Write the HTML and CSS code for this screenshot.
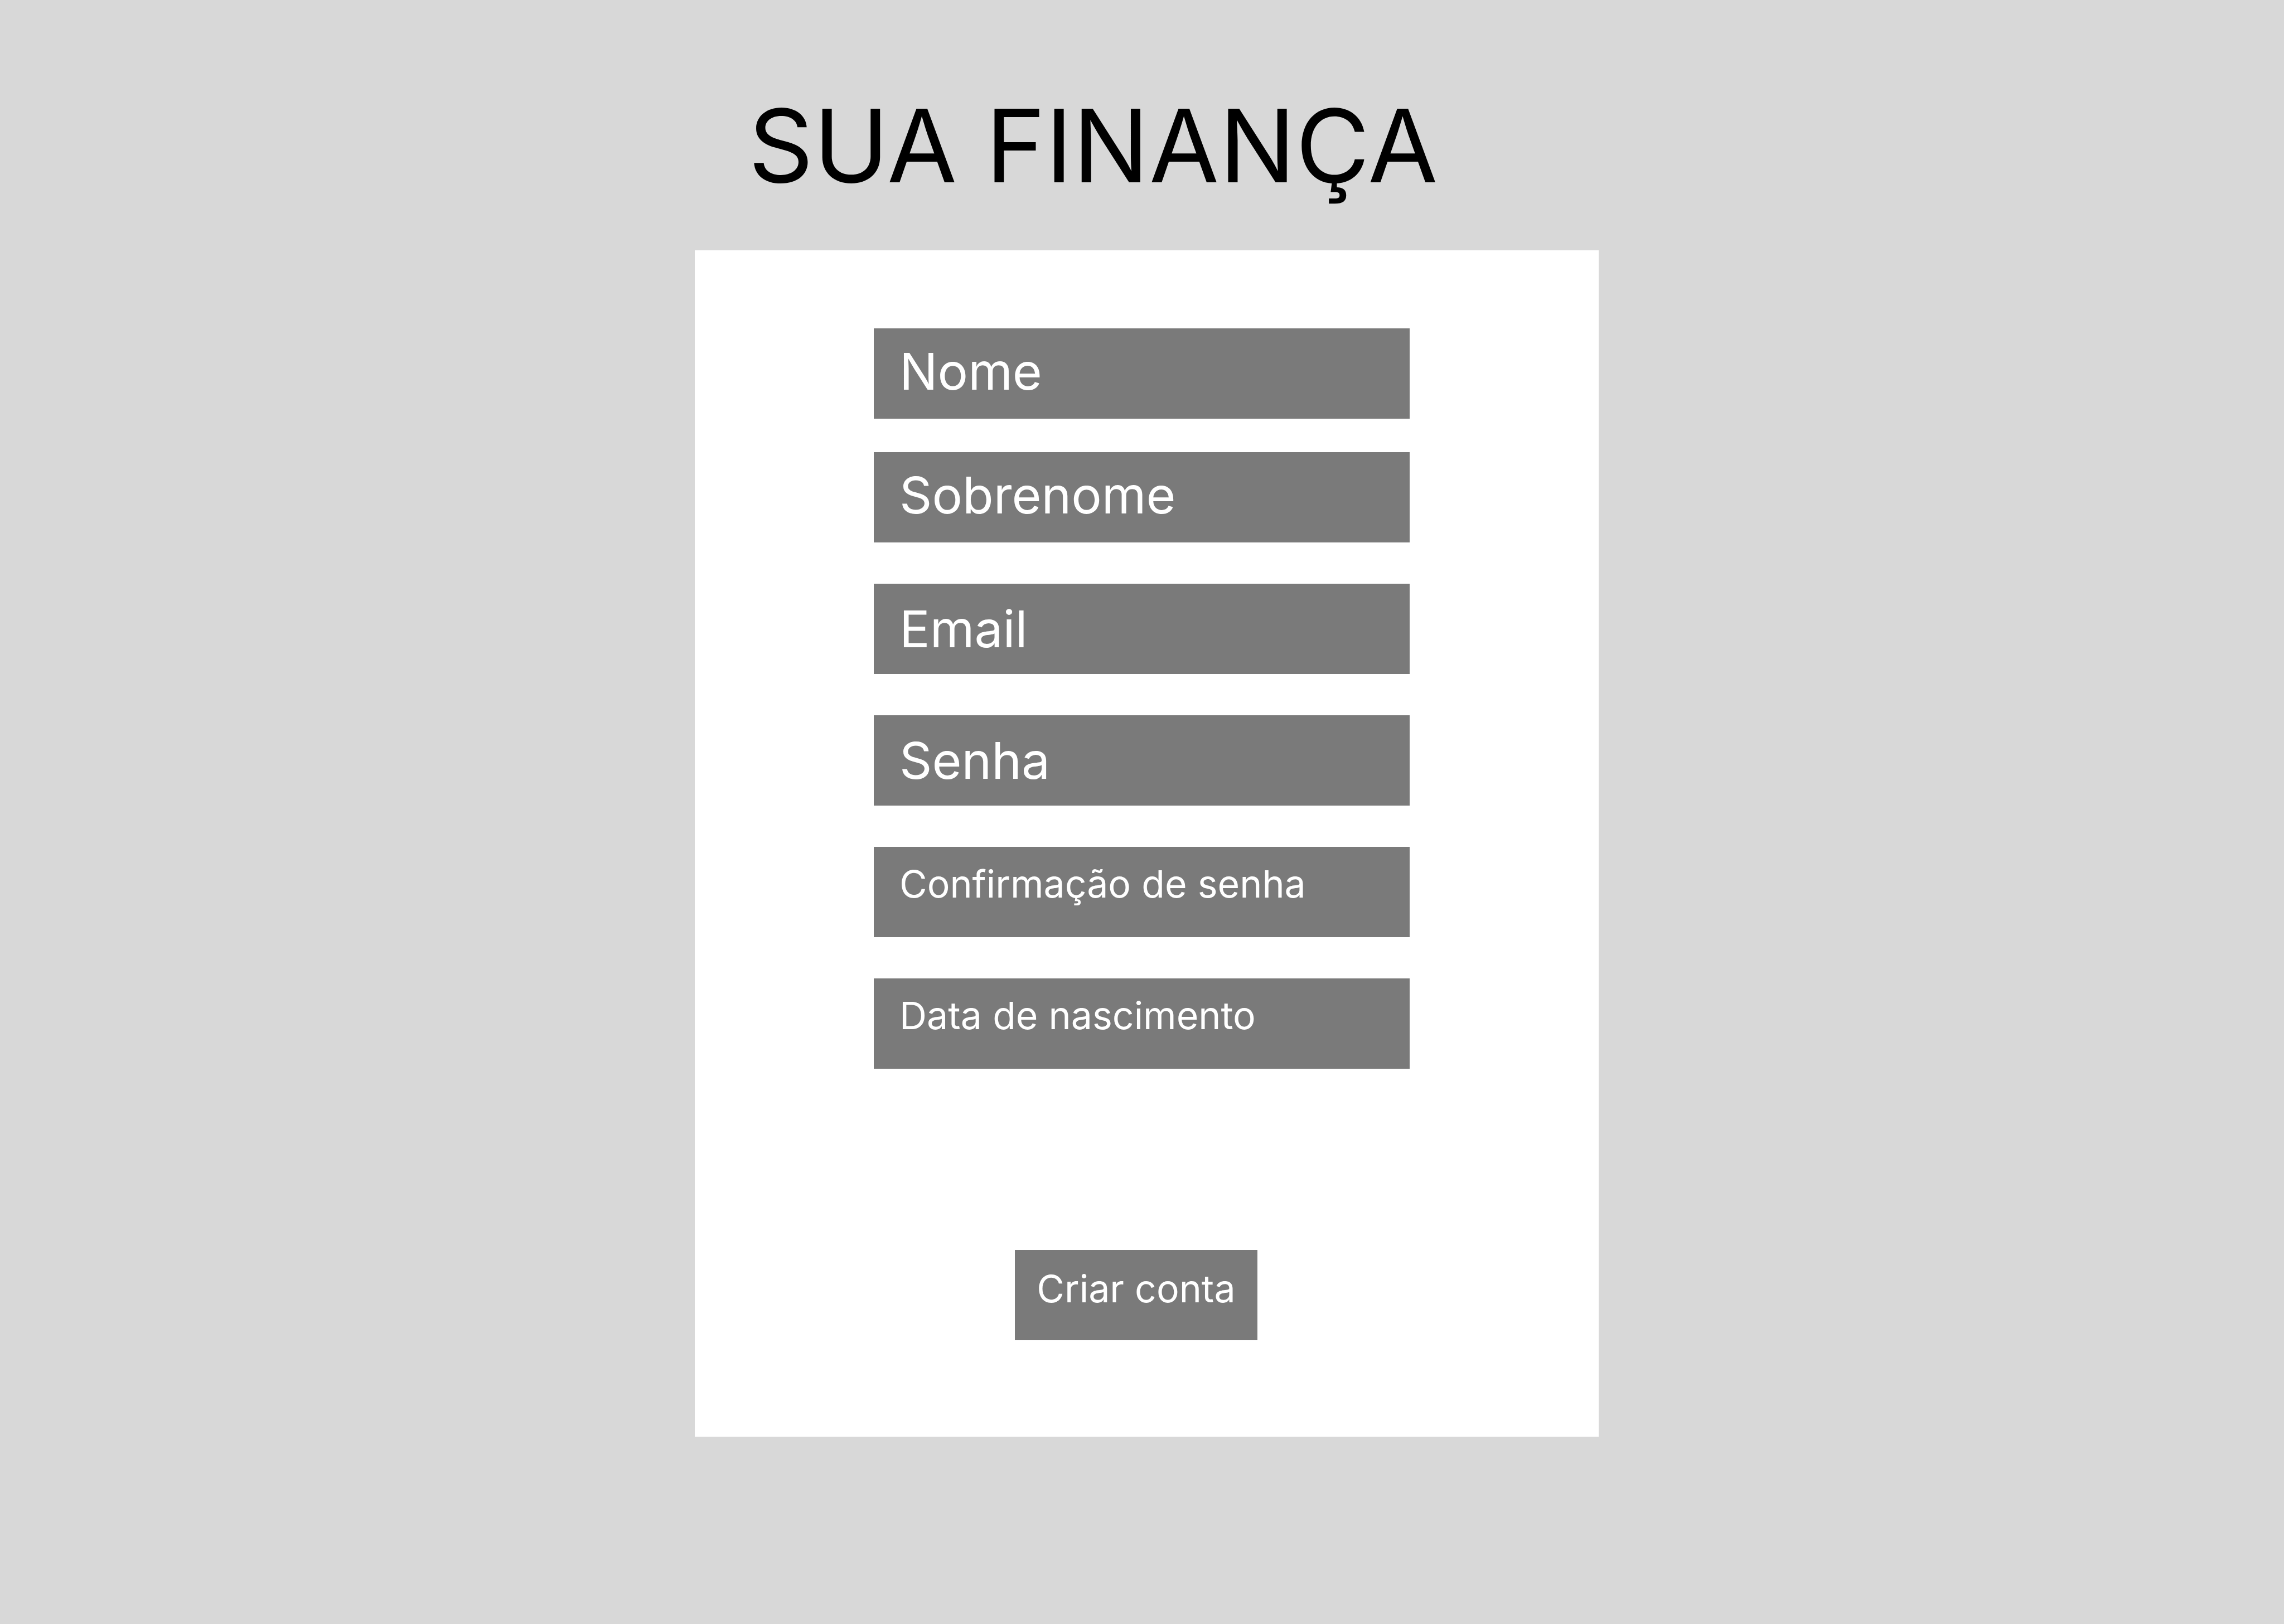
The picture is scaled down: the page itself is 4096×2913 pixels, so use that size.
FILE: index.html
```html
<!DOCTYPE html>
<html lang="pt-BR">
<head>
<meta charset="utf-8">
<meta name="viewport" content="width=device-width, initial-scale=1">
<title>Sua Finança</title>
<link rel="stylesheet" href="styles.css">
</head>
<body>
<main class="page">
  <h1 class="title">SUA FINANÇA</h1>
  <form class="card">
    <div class="fields">
      <div class="name-group">
        <input class="field" type="text" name="nome" placeholder="Nome" aria-label="Nome">
        <input class="field" type="text" name="sobrenome" placeholder="Sobrenome" aria-label="Sobrenome">
      </div>
      <input class="field" type="email" name="email" placeholder="Email" aria-label="Email">
      <input class="field" type="password" name="senha" placeholder="Senha" aria-label="Senha">
      <input class="field field-small" type="password" name="confirmacao" placeholder="Confirmação de senha" aria-label="Confirmação de senha">
      <input class="field field-small" type="text" name="nascimento" placeholder="Data de nascimento" aria-label="Data de nascimento">
    </div>
    <div class="actions">
      <button class="submit" type="submit">Criar conta</button>
    </div>
  </form>
</main>
</body>
</html>
```
FILE: styles.css
```css
* {
  box-sizing: border-box;
}

body {
  margin: 0;
  background: #d8d8d8;
  font-family: Inter, "Liberation Sans", sans-serif;
  font-optical-sizing: none;
}

.page {
  display: grid;
  grid-template-columns: minmax(0, 1621px);
  justify-content: center;
  padding: 151px 0 336px 17px;
}

.title {
  margin: 0;
  padding-left: 96px;
  color: #000;
  font-size: 182px;
  font-weight: 400;
  line-height: 220px;
  white-space: nowrap;
}

.card {
  margin-top: 78px;
  padding: 140px 339px 173px 321px;
  background: #fff;
}

.fields {
  display: flex;
  flex-direction: column;
  gap: 74px;
}

.name-group {
  display: flex;
  flex-direction: column;
  gap: 60px;
}

.field {
  width: 100%;
  height: 162px;
  padding: 0 46px;
  border: 0;
  border-radius: 0;
  background: #7a7a7a;
  color: #fff;
  font: inherit;
  font-size: 91px;
}

.field::placeholder {
  color: #fff;
  opacity: 1;
}

.name-group .field {
  padding-bottom: 8px;
}

.field-small {
  padding-bottom: 30px;
  font-size: 68px;
}

.actions {
  display: flex;
  justify-content: center;
  margin-top: 325px;
  padding-right: 20px;
}

.submit {
  width: 435px;
  height: 162px;
  padding: 0 0 24px;
  border: 0;
  background: #7a7a7a;
  color: #fff;
  font: inherit;
  font-size: 68px;
  white-space: nowrap;
}
```
